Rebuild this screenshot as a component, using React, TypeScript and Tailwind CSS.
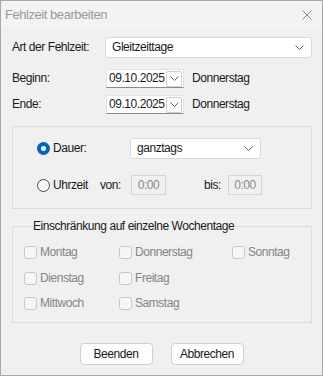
function Chevron() {
  return (
    <svg width="9" height="5" viewBox="0 0 9 5">
      <path d="M0.5 0.5 L4.5 4.5 L8.5 0.5" fill="none" stroke="#606060" strokeWidth="1" />
    </svg>
  );
}

function CloseIcon() {
  return (
    <svg width="10" height="10" viewBox="0 0 10 10">
      <path d="M0.5 0.5 L9.5 9.5 M9.5 0.5 L0.5 9.5" fill="none" stroke="#8a8a8a" strokeWidth="1" />
    </svg>
  );
}

function Select({ value, width }: { value: string; width: string }) {
  return (
    <div
      className={`${width} h-[21px] bg-white border border-[#d9d9d9] rounded-[3px] flex items-center justify-between pl-[6px] pr-[7px]`}
    >
      <span>{value}</span>
      <Chevron />
    </div>
  );
}

function DateField({ value }: { value: string }) {
  return (
    <div className="w-[78px] h-[19px] bg-white border border-[#e3e3e3] border-b-[#8a8a8a] flex items-center pl-[2px] pr-[1px] justify-between">
      <span>{value}</span>
      <div className="w-[16px] h-[16px] border border-[#cfcfcf] rounded-[2px] flex items-center justify-center">
        <Chevron />
      </div>
    </div>
  );
}

function Radio({ checked }: { checked?: boolean }) {
  return checked ? (
    <div className="w-[13px] h-[13px] shrink-0 rounded-full bg-[#0067c0] flex items-center justify-center">
      <div className="w-[5px] h-[5px] rounded-full bg-white" />
    </div>
  ) : (
    <div className="w-[13px] h-[13px] shrink-0 rounded-full border border-[#4a4a4a] bg-[#f8f8f8]" />
  );
}

function TimeField() {
  return (
    <div className="h-[20px] bg-[#f0f0f0] border border-[#d6d6d6] flex items-center justify-center text-[#8a8a8a]">
      0:00
    </div>
  );
}

function Check({ label }: { label: string }) {
  return (
    <div className="flex items-center gap-[3px] h-[25.5px] text-[#858585]">
      <div className="w-[13px] h-[13px] shrink-0 rounded-[3px] border border-[#c8c8c8] bg-[#f6f6f6]" />
      <span>{label}</span>
    </div>
  );
}

export default function App() {
  return (
    <div className="font-['Liberation_Sans',Arial,sans-serif] w-[323px] h-[376px] bg-[#f0f0f0] border border-[#a8a8a8] text-[12px] tracking-[-0.45px] leading-[15px] text-[#1a1a1a] whitespace-nowrap flex flex-col">
      <div className="h-[27px] flex items-center justify-between pl-[4px] pr-[10px] bg-[#f3f3f3]">
        <span className="text-[#9a9a9a] text-[13px]">Fehlzeit bearbeiten</span>
        <CloseIcon />
      </div>

      <div className="flex items-center mt-[9px] pl-[11px]">
        <span className="w-[93px]">Art der Fehlzeit:</span>
        <Select value="Gleitzeittage" width="w-[207px]" />
      </div>

      <div className="flex items-center mt-[11px] pl-[11px]">
        <span className="w-[94px]">Beginn:</span>
        <DateField value="09.10.2025" />
        <span className="ml-[8px]">Donnerstag</span>
      </div>

      <div className="flex items-center mt-[7px] pl-[11px]">
        <span className="w-[94px]">Ende:</span>
        <DateField value="09.10.2025" />
        <span className="ml-[8px]">Donnerstag</span>
      </div>

      <div className="mt-[12px] ml-[11px] w-[300px] h-[83px] border border-[#dcdcdc] pl-[24px]">
        <div className="flex items-center mt-[11px]">
          <div className="w-[93px] flex items-center gap-[3px]">
            <Radio checked />
            <span>Dauer:</span>
          </div>
          <Select value="ganztags" width="w-[131px]" />
        </div>
        <div className="flex items-center mt-[16px]">
          <div className="w-[63px] flex items-center gap-[3px]">
            <Radio />
            <span>Uhrzeit</span>
          </div>
          <span className="w-[31px]">von:</span>
          <div className="w-[35px]">
            <TimeField />
          </div>
          <span className="ml-[38px] w-[24px]">bis:</span>
          <div className="w-[34px]">
            <TimeField />
          </div>
        </div>
      </div>

      <fieldset className="mt-[10px] ml-[11px] w-[300px] h-[104px] border border-[#dcdcdc] pl-[11px] pt-[6px]">
        <legend className="ml-[8px] px-[1px]">Einschränkung auf einzelne Wochentage</legend>
        <div className="grid grid-cols-[95px_113px_1fr]">
          <Check label="Montag" />
          <Check label="Donnerstag" />
          <Check label="Sonntag" />
          <Check label="Dienstag" />
          <Check label="Freitag" />
          <div />
          <Check label="Mittwoch" />
          <Check label="Samstag" />
        </div>
      </fieldset>

      <div className="flex justify-center gap-[18px] mt-[20px]">
        <button className="w-[73px] h-[22px] bg-[#fdfdfd] border border-[#d0d0d0] rounded-[4px]">Beenden</button>
        <button className="w-[73px] h-[22px] bg-[#fdfdfd] border border-[#d0d0d0] rounded-[4px]">Abbrechen</button>
      </div>
    </div>
  );
}
